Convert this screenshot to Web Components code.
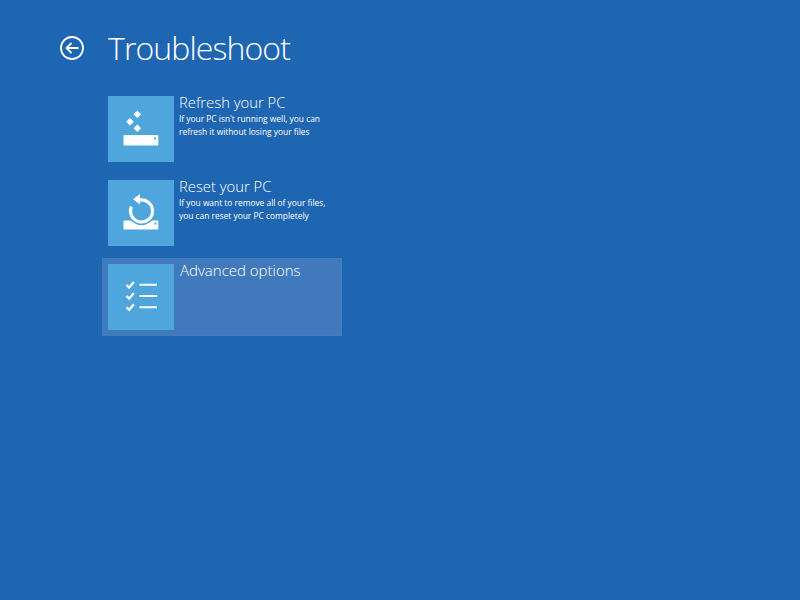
<!DOCTYPE html>
<html lang="en">
<head>
<meta charset="utf-8">
<title>Troubleshoot</title>
<style>
  html, body { margin: 0; height: 100%; background: #1f66b2; }
  body { font-family: "Open Sans", "Liberation Sans", sans-serif; color: #fff; overflow: hidden; }
</style>
</head>
<body>
<troubleshoot-page>
  <option-tile heading="Refresh your PC">
    <svg slot="icon" width="66" height="66" viewBox="0 0 66 66">
      <path fill="#fff" d="M29.3 14.5l3.8 3.8-3.8 3.8-3.8-3.8zM22 22l3.8 3.8-3.8 3.8-3.8-3.8zM29.3 28.5l3.8 3.8-3.8 3.8-3.8-3.8z"/>
      <rect x="15.5" y="39" width="34.8" height="10.5" rx="1" fill="#fff"/>
      <rect x="46" y="41.5" width="2" height="2" fill="#4fa6dd"/>
    </svg>
    If your PC isn't running well, you can<br>refresh it without losing your files
  </option-tile>
  <option-tile heading="Reset your PC">
    <svg slot="icon" width="66" height="66" viewBox="0 0 66 66">
      <path fill="#fff" d="M15.5 41.5a1 1 0 0 1 1-1H49.3a1 1 0 0 1 1 1v8H15.5z"/>
      <rect x="46.5" y="42.5" width="2" height="2" fill="#4fa6dd"/>
      <circle cx="33.5" cy="31" r="14.2" fill="#4fa6dd"/>
      <path fill="none" stroke="#fff" stroke-width="3.2" d="M30.5 20.4A11 11 0 1 1 23.4 26.7"/>
      <path fill="#fff" d="M25 19.3L32 14v10.6z"/>
    </svg>
    If you want to remove all of your files,<br>you can reset your PC completely
  </option-tile>
  <option-tile heading="Advanced options" selected>
    <svg slot="icon" width="66" height="66" viewBox="0 0 66 66">
      <path fill="none" stroke="#fff" stroke-width="2.2" d="M18.5 21l2.6 2.6 4.8-5.6M18.5 32l2.6 2.6 4.8-5.6M18.5 43.3l2.6 2.6 4.8-5.6"/>
      <path fill="none" stroke="#fff" stroke-width="2" d="M31.5 20.7H49M31.5 32H49M31.5 43.3H49"/>
    </svg>
  </option-tile>
</troubleshoot-page>
<script>
class TroubleshootPage extends HTMLElement {
  constructor() {
    super();
    this.attachShadow({ mode: "open" }).innerHTML = `
      <style>
        :host { display: block; padding: 0 0 0 60px; }
        header { display: flex; align-items: center; gap: 24px; height: 90px; padding-top: 6px; box-sizing: border-box; }
        svg { display: block; }
        h1 { margin: 0; font-size: 32px; font-weight: 300; line-height: 44px; letter-spacing: -0.9px; }
        #options { display: flex; flex-direction: column; gap: 6px; margin-left: 42px; width: 240px; }
      </style>
      <header>
        <svg width="24" height="24" viewBox="0 0 24 24">
          <circle cx="12" cy="12" r="11" fill="none" stroke="#fff" stroke-width="1.8"/>
          <path fill="none" stroke="#fff" stroke-width="1.8" d="M18.5 12H6.5M11.5 7l-5 5 5 5"/>
        </svg>
        <h1>Troubleshoot</h1>
      </header>
      <div id="options"><slot></slot></div>`;
  }
}

class OptionTile extends HTMLElement {
  constructor() {
    super();
    this.attachShadow({ mode: "open" }).innerHTML = `
      <style>
        :host { display: flex; gap: 5px; height: 78px; padding: 6px; box-sizing: border-box; }
        :host([selected]) { background: #407abc; box-shadow: inset 0 0 0 1px #447dbe; gap: 6px; }
        #tile { flex: none; width: 66px; height: 66px; background: #4fa6dd; }
        ::slotted(svg) { display: block; }
        h2 { margin: -1px 0 0; font-size: 14.8px; font-weight: 300; line-height: 15px; }
        :host([selected]) h2 { font-size: 15px; }
        #desc { font-size: 8.4px; line-height: 12.5px; margin-top: 3px; white-space: nowrap; }
      </style>
      <div id="tile"><slot name="icon"></slot></div>
      <div>
        <h2></h2>
        <div id="desc"><slot></slot></div>
      </div>`;
  }

  connectedCallback() {
    this.shadowRoot.querySelector("h2").textContent = this.getAttribute("heading");
  }
}

customElements.define("troubleshoot-page", TroubleshootPage);
customElements.define("option-tile", OptionTile);
</script>
</body>
</html>
